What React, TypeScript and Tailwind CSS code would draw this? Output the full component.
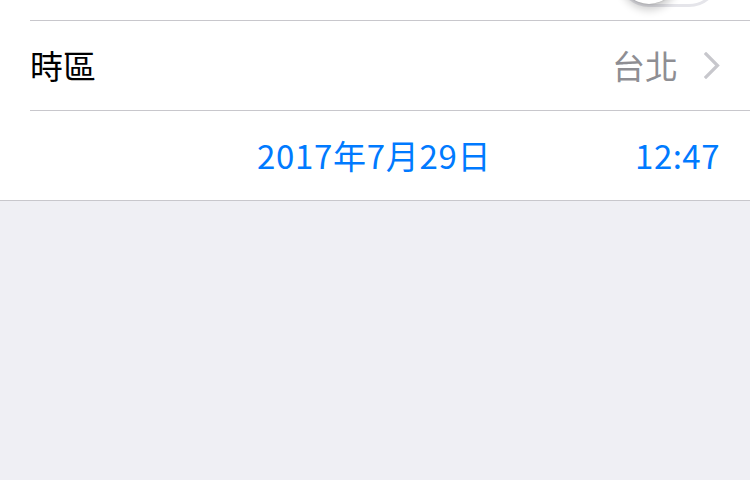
export default function App() {
  const font = { fontFamily: '"Noto Sans CJK TC", "Noto Sans", Roboto, sans-serif' };
  return (
    <div className="w-[750px] h-[480px] bg-[#efeff4] overflow-hidden" style={font}>
      <div className="bg-white border-b border-[#c8c7cc] overflow-hidden">
        {/* partially visible switch row */}
        <div className="-mt-[69px] h-[90px] ml-[30px] pr-[30px] flex items-center justify-end border-b border-[#c8c7cc]">
          <div className="relative w-[102px] h-[62px] rounded-full border-[3px] border-[#e5e5ea] bg-white">
            <div className="absolute left-0 top-0 w-[56px] h-[56px] rounded-full bg-white shadow-[0_6px_8px_rgba(0,0,0,0.2),0_0_2px_rgba(0,0,0,0.25)]" />
          </div>
        </div>
        <div className="h-[90px] ml-[30px] pr-[30px] flex items-center justify-between border-b border-[#c8c7cc]">
          <span className="text-[33px] text-black leading-none">時區</span>
          <div className="flex items-center gap-[26px]">
            <span className="text-[33px] text-[#8e8e93] leading-none">台北</span>
            <svg width="16" height="27" viewBox="0 0 16 27" fill="none">
              <path d="M2 2 L13.5 13.5 L2 25" stroke="#c7c7cc" strokeWidth="3.2" strokeLinecap="square" />
            </svg>
          </div>
        </div>
        <div className="h-[89px] pr-[30px] flex items-center text-[#007aff] text-[33px] leading-none">
          <span className="ml-[257px] tracking-[0.7px]">2017年7月29日</span>
          <span className="ml-auto tracking-[0.5px]">12:47</span>
        </div>
      </div>
    </div>
  );
}
